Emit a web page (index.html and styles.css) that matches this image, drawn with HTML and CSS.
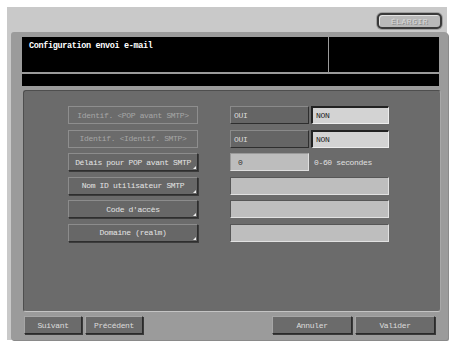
FILE: index.html
```html
<!DOCTYPE html>
<html lang="fr">
<head>
    <meta charset="UTF-8">
    <title>Configuration envoi e-mail</title>
    <link rel="stylesheet" href="styles.css">
</head>
<body>
    <div class="screen">
        <div class="topbar">
            <button class="zoom-btn">ÉLARGIR</button>
        </div>
        <div class="panel">
            <div class="header">
                <div class="title">Configuration envoi e-mail</div>
                <div class="header-side"></div>
            </div>
            <div class="message"></div>

            <div class="content">
                <div class="row">
                    <button class="key disabled">Identif. &lt;POP avant SMTP&gt;</button>
                    <div class="choice">
                        <span class="opt">OUI</span>
                        <span class="opt on">NON</span>
                    </div>
                </div>
                <div class="row">
                    <button class="key disabled">Identif. &lt;Identif. SMTP&gt;</button>
                    <div class="choice">
                        <span class="opt">OUI</span>
                        <span class="opt on">NON</span>
                    </div>
                </div>
                <div class="row">
                    <button class="key">Délais pour POP avant SMTP</button>
                    <div class="choice">
                        <span class="num">0</span>
                        <span class="hint">0-60 secondes</span>
                    </div>
                </div>
                <div class="row">
                    <button class="key">Nom ID utilisateur SMTP</button>
                    <span class="field"></span>
                </div>
                <div class="row">
                    <button class="key">Code d'accès</button>
                    <span class="field"></span>
                </div>
                <div class="row">
                    <button class="key">Domaine (realm)</button>
                    <span class="field"></span>
                </div>
            </div>

            <div class="footer">
                <div class="group">
                    <button class="nav">Suivant</button>
                    <button class="nav">Précédent</button>
                </div>
                <div class="group">
                    <button class="nav wide">Annuler</button>
                    <button class="nav wide">Valider</button>
                </div>
            </div>
        </div>
    </div>
</body>
</html>
```

FILE: styles.css
```css
body {
    margin: 0;
    padding: 7px;
    background-color: #ffffff;
    font-family: "Liberation Mono", "DejaVu Sans Mono", monospace;
    font-size: 8px;
    letter-spacing: -0.35px;
}
button {
    font-family: inherit;
    font-size: inherit;
    letter-spacing: inherit;
    font-weight: normal;
    padding: 0;
    cursor: pointer;
}
.screen {
    width: 440px;
    height: 333px;
    background-color: #c9c9c9;
    display: flex;
    flex-direction: column;
}
.topbar {
    height: 25px;
    display: flex;
    justify-content: flex-end;
    align-items: flex-start;
    padding-right: 5px;
}
.zoom-btn {
    margin-top: 6px;
    width: 65px;
    height: 16px;
    background-color: #b9b9b9;
    border: 2px solid #3a3a3a;
    border-radius: 5px;
    box-shadow: inset 1px 1px 0 #e4e4e4, 0 0 0 1px #a0a0a0;
    color: #d8d8d8;
    text-shadow: 1px 1px 0 #8a8a8a;
    font-size: 8px;
    letter-spacing: 0.5px;
}
.panel {
    margin-left: 4px;
    width: 437px;
    height: 308px;
    box-sizing: border-box;
    background-color: #9b9b9b;
    border-radius: 3px 4px 2px 2px;
    box-shadow: 1px 1px 0 #8a8a8a;
    padding: 5px 9px 0 11px;
    display: flex;
    flex-direction: column;
}
.header {
    height: 35px;
    display: flex;
    background-color: #000000;
}
.title {
    flex: 1;
    color: #ffffff;
    font-weight: bold;
    font-size: 8.5px;
    padding: 4px 0 0 7px;
    border-right: 1px solid #9b9b9b;
}
.header-side {
    width: 110px;
}
.message {
    height: 12px;
    margin-top: 2px;
    background-color: #000000;
}
.content {
    margin: 4px -2px 0 1px;
    height: 222px;
    box-sizing: border-box;
    background-color: #6b6b6b;
    border: 1px solid #4e4e4e;
    border-right-color: #a8a8a8;
    border-bottom-color: #c4c4c4;
    border-radius: 3px;
    padding: 15px 0 0 44px;
    display: flex;
    flex-direction: column;
    gap: 5.6px;
}
.row {
    display: flex;
    align-items: center;
    gap: 32px;
    height: 18px;
}
.key {
    position: relative;
    width: 130px;
    height: 18px;
    box-sizing: border-box;
    background-color: #676767;
    color: #e4e4e4;
    border: 1px solid #2e2e2e;
    border-top-color: #8c8c8c;
    border-left-color: #8c8c8c;
    box-shadow: 1px 1px 0 #3c3c3c;
}
.key::after {
    content: "";
    position: absolute;
    right: 1px;
    bottom: 1px;
    border-left: 3px solid transparent;
    border-bottom: 3px solid #f0f0f0;
}
.key.disabled {
    background-color: #6b6b6b;
    color: #a6a6a6;
    border-color: #8e8e8e;
    box-shadow: none;
}
.key.disabled::after {
    display: none;
}
.choice {
    display: flex;
    align-items: center;
    gap: 2px;
}
.opt {
    width: 79px;
    height: 18px;
    box-sizing: border-box;
    padding: 4px 0 0 3px;
    background-color: #656565;
    color: #dcdcdc;
    border: 1px solid #2e2e2e;
    border-top-color: #8a8a8a;
    border-left-color: #8a8a8a;
}
.opt.on {
    width: 78px;
    background-color: #d3d3d3;
    color: #222222;
    border: 1px solid #ededed;
    border-top: 2px solid #222222;
    border-left: 2px solid #222222;
    padding: 3px 0 0 3px;
}
.num {
    width: 79px;
    height: 18px;
    box-sizing: border-box;
    padding: 4px 0 0 7px;
    background-color: #bdbdbd;
    color: #333333;
    border: 1px solid #9a9a9a;
    border-bottom-color: #e0e0e0;
    border-right-color: #e0e0e0;
}
.hint {
    margin-left: 3px;
    color: #e0e0e0;
}
.field {
    width: 159px;
    height: 18px;
    box-sizing: border-box;
    background-color: #bebebe;
    border: 1px solid #565656;
    border-bottom-color: #e2e2e2;
    border-right-color: #e2e2e2;
}
.footer {
    margin-top: 4px;
    display: flex;
    justify-content: space-between;
    padding: 0 4px 0 2px;
}
.group {
    display: flex;
    gap: 3px;
}
.nav {
    width: 58px;
    height: 18px;
    background-color: #6b6b6b;
    color: #dcdcdc;
    border: 1px solid #2a2a2a;
    border-top-color: #a6a6a6;
    border-left-color: #a6a6a6;
    box-shadow: 1px 1px 0 #3a3a3a;
}
.nav.wide {
    width: 80px;
}
```
